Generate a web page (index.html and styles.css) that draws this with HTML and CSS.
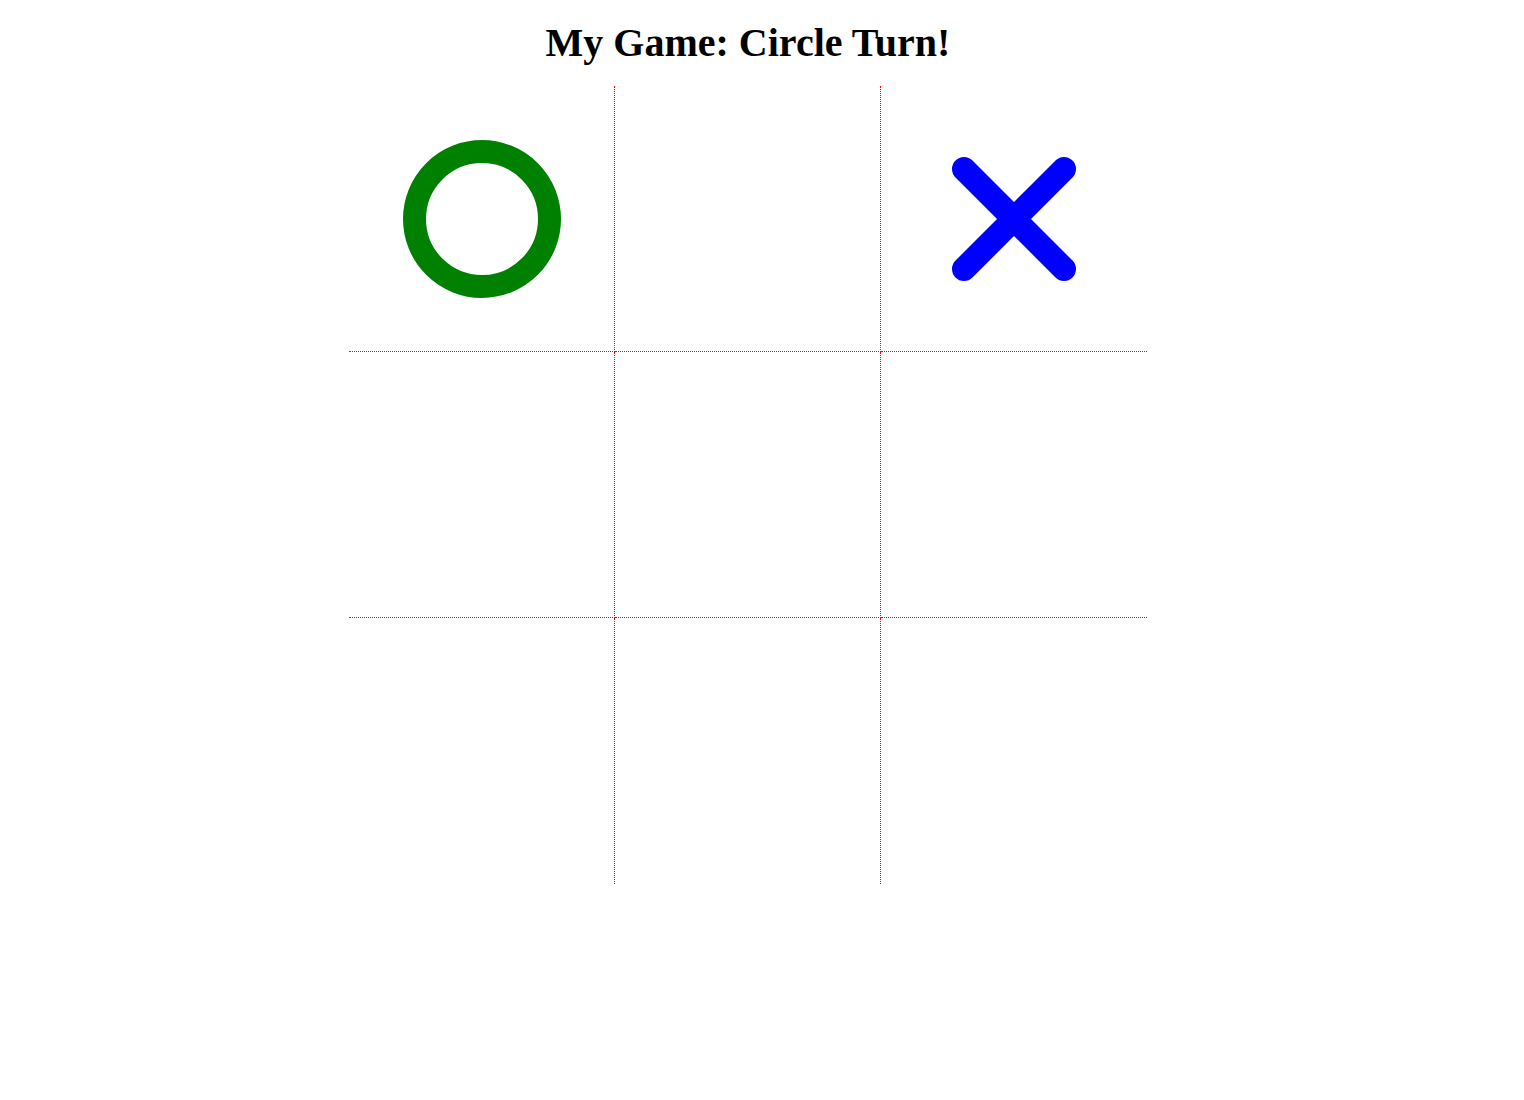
FILE: index.html
```html
<!DOCTYPE html>
<html lang="en">
<head>
<meta charset="utf-8">
<title>My Game</title>
<link rel="stylesheet" href="styles.css">
</head>
<body>
<div class="page">
  <h1 class="title">My Game: Circle Turn!</h1>
  <div class="board">
    <div class="cell bR bB">
      <svg class="mark" width="180" height="180" viewBox="0 0 180 180"><circle cx="90" cy="90" r="67.5" fill="none" stroke="#008000" stroke-width="23"/></svg>
    </div>
    <div class="cell bR bB"></div>
    <div class="cell bB">
      <svg class="mark" width="180" height="180" viewBox="0 0 180 180"><path d="M40 40 L140 140 M140 40 L40 140" fill="none" stroke="#0000ff" stroke-width="24" stroke-linecap="round"/></svg>
    </div>
    <div class="cell bR bB"></div>
    <div class="cell bR bB"></div>
    <div class="cell bB"></div>
    <div class="cell bR"></div>
    <div class="cell bR"></div>
    <div class="cell"></div>
  </div>
</div>
</body>
</html>
```

FILE: styles.css
```css
body {
  margin: 8px;
  background: #ffffff;
  font-family: "Liberation Serif", "Times New Roman", serif;
}
.page {
  width: 1480px;
}
.title {
  margin: 12px 0 20px;
  font-size: 40px;
  line-height: 46px;
  font-weight: bold;
  text-align: center;
  color: #000;
}
.board {
  width: 798px;
  margin: 0 auto;
  display: grid;
  grid-template-columns: repeat(3, 266px);
  grid-template-rows: repeat(3, 266px);
}
.cell {
  box-sizing: border-box;
  display: flex;
  align-items: center;
  justify-content: center;
}
.bR { border-right: 1px dotted #ff0000; }
.bB { border-bottom: 1px dotted #ff0000; }
.mark { display: block; }
```
